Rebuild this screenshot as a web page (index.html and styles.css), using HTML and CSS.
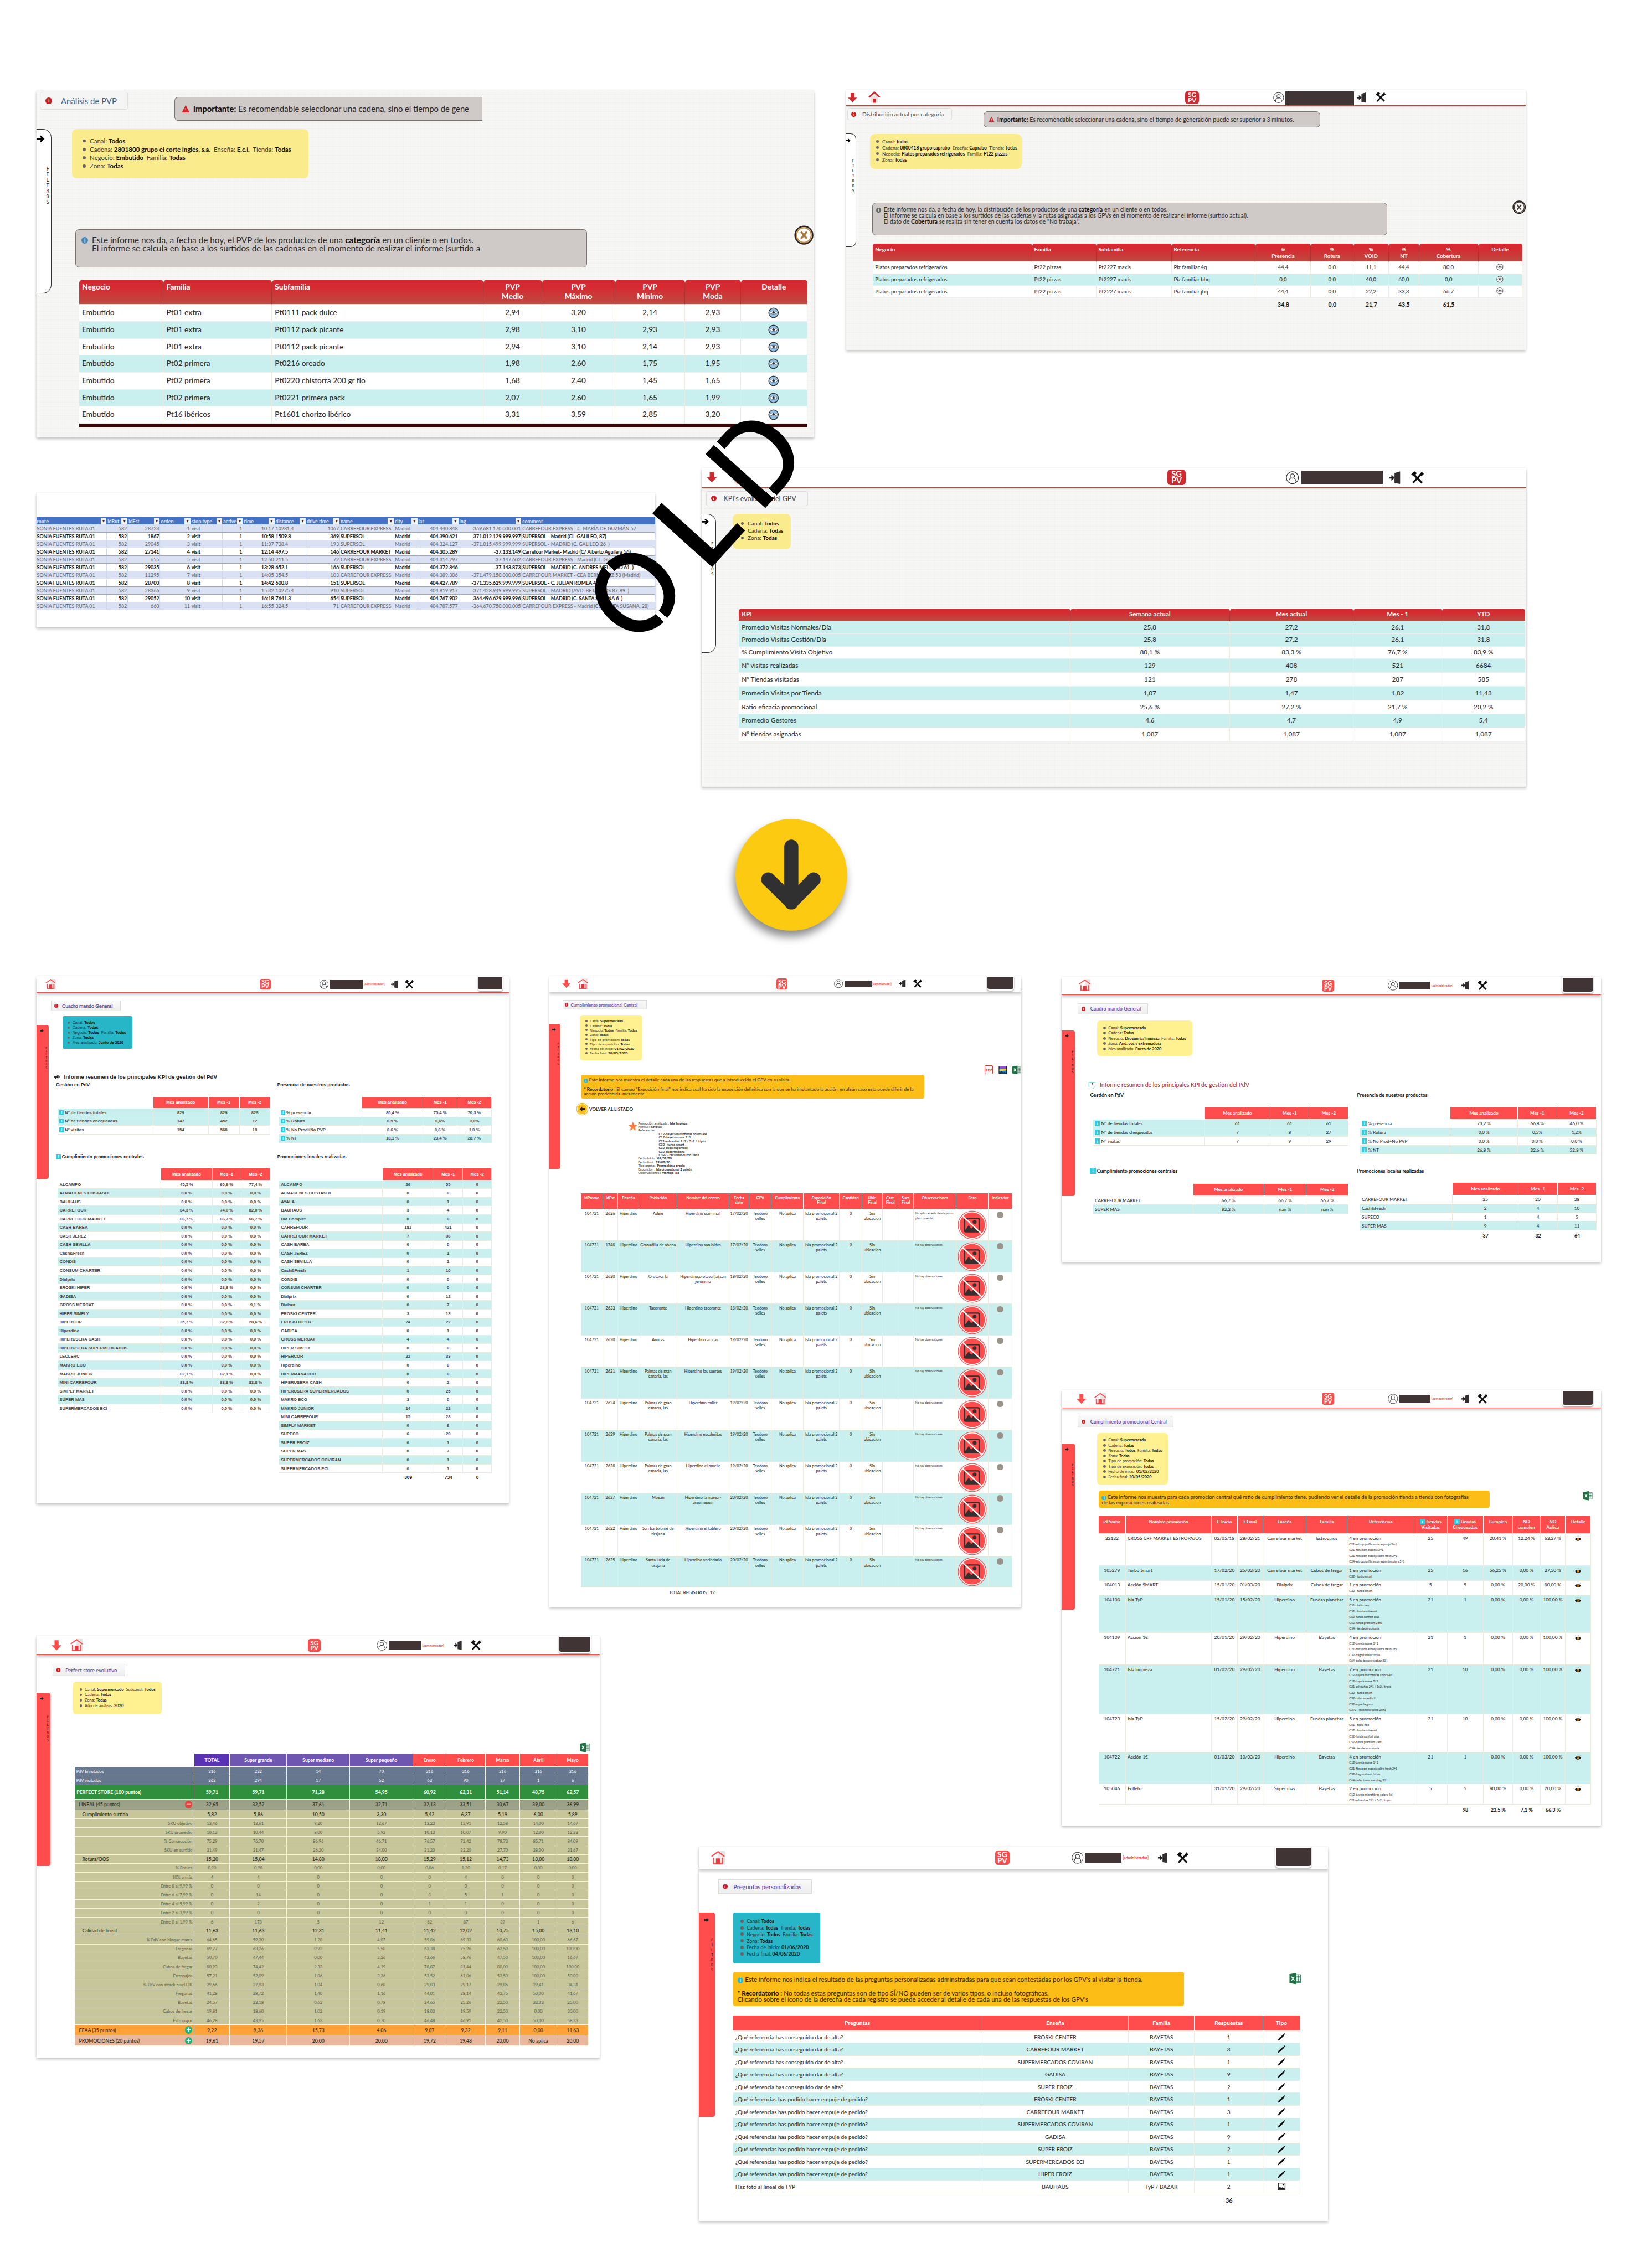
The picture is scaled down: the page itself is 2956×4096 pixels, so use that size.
FILE: index.html
```html
<!DOCTYPE html>
<html lang="es">
<head>
<meta charset="utf-8">
<title>SGPV - Informes</title>
<link rel="stylesheet" href="styles.css">
</head>
<body>
<svg class="defs" aria-hidden="true">
  <symbol id="down" viewBox="0 0 20 20"><path d="M6 0h8v10h6L10 20 0 10h6z"/></symbol>
  <symbol id="right" viewBox="0 0 20 20"><path d="M0 6h10V1l10 9-10 9v-5H0z"/></symbol>
  <symbol id="thin" viewBox="0 0 20 20"><path d="M0 10h17M9 3l8 7-8 7" fill="none" stroke="currentColor" stroke-width="4"/></symbol>
  <symbol id="home" viewBox="0 0 20 20"><path d="M10 0h10v20H10z" fill="#e6e4e4"/><path d="M4 8.500v10h12v-10L10 4z" fill="#fff"/><path d="M10 4v15h6V8.500z" fill="#efe3e3"/><path d="M.6 8.200 10 1.200l9.400 7" fill="none" stroke="currentColor" stroke-width="1.700"/><path d="M3.600 10v8.600h12.800V10" fill="none" stroke="currentColor" stroke-width="2"/><path d="M7 11h6v8H7z" fill="#e23c3e"/></symbol>
  <symbol id="homeold" viewBox="0 0 20 20"><path d="M4 9v10h12V9l-6-6z" fill="#e8e4e2"/><path d="M1 10 10 1.500 19 10" fill="none" stroke="currentColor" stroke-width="2.600"/><path d="M7.500 12h5v7h-5z" fill="currentColor"/></symbol>
  <symbol id="user" viewBox="0 0 20 20"><g fill="none" stroke="#333" stroke-width="1"><circle cx="10" cy="10" r="9.300"/><circle cx="10" cy="7.500" r="3.300"/><path d="M4.500 16c0-4 2-5.500 5.500-5.500s5.500 1.500 5.500 5.500"/></g></symbol>
  <symbol id="door" viewBox="0 0 20 20"><path d="M9 2.500 18 0v20l-9-1.500z" fill="#332d2d"/><path d="M0 8.500h4V5l5.500 5L4 15v-3.500H0z" fill="#222"/></symbol>
  <symbol id="tools" viewBox="0 0 20 20"><g fill="none" stroke="#111" stroke-width="3"><path d="M3 18 16 4M4 5l13 13"/></g><path d="M0 5 5 0l4 3-5 5zM13 5l4-5 1 3 2 1-4 4z" fill="#111"/></symbol>
  <symbol id="excel" viewBox="0 0 20 20"><path d="M11 3h8.500v14H11z" fill="#fff" stroke="#1d7044" stroke-width=".8"/><path d="M12 6h7M12 9h7M12 12h7M12 15h7M15.500 4v12" stroke="#1d7044" stroke-width=".8"/><path d="M0 2.200 12 0v20L0 17.800z" fill="#1d7044"/><path d="m3.500 6.500 5 7m0-7-5 7" stroke="#fff" stroke-width="1.600"/></symbol>
  <symbol id="gallery" viewBox="0 0 20 20"><rect x=".5" y=".5" width="19" height="19" rx="2" fill="#111"/><path d="M2 2h16v6H2z" fill="#8c4fd6"/><path d="M2 7h16v11H2z" fill="#1c86c9"/><path d="M2 9c5-3 8-1 16-2v4c-7 2-10 0-16 2z" fill="#f4cf3a"/><path d="m2 18 5-6 4 4 3-2 4 4z" fill="#16324a"/></symbol>
  <symbol id="star" viewBox="0 0 20 20"><path d="m10 0 3 7 7 .6-5.300 5 1.600 7.400L10 16l-6.300 4 1.600-7.400L0 7.600 7 7z" fill="#ff7a3d"/></symbol>
  <symbol id="mega" viewBox="0 0 20 20"><path d="M0 7h8l5-4v13l-5-4H6l1 6H3l-1-6H0zM15 4l2 0v11l-2 0zM18.500 7h1.500v5h-1.500z" fill="#2c2626"/></symbol>
  <symbol id="ask" viewBox="0 0 20 20"><path d="M1 1h18v14h-3v4.500L11 15H1z" fill="#fff" stroke="#5ccfe0" stroke-width="1.300"/></symbol>
  <symbol id="eye" viewBox="0 0 20 20"><path d="M0 12c4-6 16-6 20 0-4 8-16 8-20 0z" fill="#111"/><circle cx="10" cy="12" r="4.200" fill="#e79a1d"/><circle cx="10" cy="12" r="1.800" fill="#111"/><path d="M3 5 2 3M7 3.500 6.500 1M10 3V.5M13 3.500l.5-2.500M17 5l1-2" stroke="#555" stroke-width="1"/></symbol>
  <symbol id="pencil" viewBox="0 0 20 20"><path d="M0 20 2 14 14.500 2.500l3 3L5 17zM15.500 1.500 17 0l3 3-1.500 1.500z" fill="#0b0b0b"/></symbol>
  <symbol id="pic" viewBox="0 0 20 20"><rect x="1" y="1" width="18" height="18" rx="1.500" fill="#fff" stroke="#111" stroke-width="2"/><circle cx="14" cy="6" r="2" fill="#111"/><path d="m2 18 0-5 4-2 3 3 3-2 6 3v3z" fill="#111"/></symbol>
  <symbol id="nophoto" viewBox="0 0 60 60"><circle cx="30" cy="30" r="29.500" fill="#ff4c4c"/><circle cx="30" cy="30" r="27" fill="none" stroke="#fff" stroke-width="2"/><path d="M17 15h25a4 4 0 0 1 4 4v22a4 4 0 0 1-4 4H17a4 4 0 0 1-4-4V19a4 4 0 0 1 4-4z" fill="#3a2d2d"/><path d="M16 19a1.500 1.500 0 0 1 1.500-1.500h24A1.500 1.500 0 0 1 43 19v21l-9-8-6 5-5-7-7 10z" fill="#ff4c4c"/><circle cx="35" cy="23.500" r="4" fill="#3a2d2d"/><path d="M11 12 50 48" stroke="#fff" stroke-width="2.600"/></symbol>
  <symbol id="look" viewBox="0 0 20 20"><circle cx="10" cy="10" r="8.800" fill="var(--lens,#8fc0e6)" stroke="#333" stroke-width="1.500"/><path d="M3 9.500c3-4 11-4 14 0-3 4-11 4-14 0z" fill="#fff" stroke="#445" stroke-width=".8"/><circle cx="10" cy="9.500" r="2.300" fill="#2b3440"/></symbol>
  <symbol id="close" viewBox="0 0 40 40"><circle cx="20" cy="20" r="18" fill="#fff" stroke="#2a2320" stroke-width="3"/><circle cx="20" cy="20" r="15" fill="none" stroke="var(--ring,#c08a45)" stroke-width="2.500"/><path d="m14 13 12 14m0-14L14 27" stroke="var(--ring,#b07b38)" stroke-width="4"/></symbol>
  <symbol id="warn" viewBox="0 0 20 20"><path d="m10 1 9.500 18H.5z" fill="#d9232b"/><path d="M10 8v5m0 1.500v2" stroke="#fff" stroke-width="1.400"/></symbol>
</svg>

<main class="canvas">

<section class="panel old p1">
  <div class="head">
    <h2 class="tab"><i class="dot">i</i>Análisis de PVP</h2>
    <p class="note warn"><svg><use href="#warn"/></svg><span><b>Importante:</b> Es recomendable seleccionar una cadena, sino el tiempo de gene</span></p>
  </div>
  <div class="body">
    <aside class="filters"><svg><use href="#thin"/></svg><span>FILTROS</span></aside>
    <div class="main">
      <ul class="crumbs"><li>Canal: <b>Todos</b></li><li>Cadena: <b>2801800 grupo el corte ingles, s.a.</b>&nbsp; Enseña: <b>E.c.i.</b>&nbsp; Tienda: <b>Todas</b></li><li>Negocio: <b>Embutido</b>&nbsp; Familia: <b>Todas</b></li><li>Zona: <b>Todas</b></li></ul>
      <div class="note info"><i class="bubble">i</i><p>Este informe nos da, a fecha de hoy, el PVP de los productos de una <b>categoría</b> en un cliente o en todos.<br>El informe se calcula en base a los surtidos de las cadenas en el momento de realizar el informe (surtido a</p></div>
      <div class="table" id="t1"></div>
      <div class="foot"></div>
    </div>
  </div>
  <svg class="close"><use href="#close"/></svg>
</section>

<section class="panel old p2">
  <header class="bar"><svg class="down"><use href="#down"/></svg><svg class="home"><use href="#homeold"/></svg><div class="logo">SG<br>PV</div><svg class="user"><use href="#user"/></svg><span class="mask"></span><svg class="door"><use href="#door"/></svg><svg class="tools"><use href="#tools"/></svg></header>
  <div class="head">
    <h2 class="tab"><i class="dot">i</i>Distribución actual por categoría</h2>
    <p class="note warn"><svg><use href="#warn"/></svg><span><b>Importante:</b> Es recomendable seleccionar una cadena, sino el tiempo de generación puede ser superior a 3 minutos.</span></p>
  </div>
  <div class="body">
    <aside class="filters"><svg><use href="#thin"/></svg><span>FILTROS</span></aside>
    <div class="main">
      <ul class="crumbs"><li>Canal: <b>Todos</b></li><li>Cadena: <b>0800418 grupo caprabo</b>&nbsp; Enseña: <b>Caprabo</b>&nbsp; Tienda: <b>Todas</b></li><li>Negocio: <b>Platos preparados refrigerados</b>&nbsp; Familia: <b>Pt22 pizzas</b></li><li>Zona: <b>Todas</b></li></ul>
      <div class="note info"><i class="bubble">i</i><p>Este informe nos da, a fecha de hoy, la distribución de los productos de una <b>categoría</b> en un cliente o en todos.<br>El informe se calcula en base a los surtidos de las cadenas y la rutas asignadas a los GPVs en el momento de realizar el informe (surtido actual).<br>El dato de <b>Cobertura</b> se realiza sin tener en cuenta los datos de "No trabaja".</p></div>
      <div class="table" id="t2"></div>
    </div>
  </div>
  <svg class="close"><use href="#close"/></svg>
</section>

<section class="panel p3"><div class="table" id="t3"></div></section>

<section class="panel old p4">
  <header class="bar"><svg class="down"><use href="#down"/></svg><svg class="home"><use href="#homeold"/></svg><div class="logo">SG<br>PV</div><svg class="user"><use href="#user"/></svg><span class="mask"></span><svg class="door"><use href="#door"/></svg><svg class="tools"><use href="#tools"/></svg></header>
  <div class="head"><h2 class="tab"><i class="dot">i</i>KPI's evolución del GPV</h2></div>
  <div class="body">
    <aside class="filters"><svg><use href="#thin"/></svg><span>FILTROS</span></aside>
    <div class="main">
      <ul class="crumbs"><li>Canal: <b>Todos</b></li><li>Cadena: <b>Todas</b></li><li>Zona: <b>Todas</b></li></ul>
      <div class="table" id="t4"></div>
    </div>
  </div>
</section>

<div class="stamp"><span class="o"><i>O</i></span><span class="l"><i>L</i></span><span class="d"><i>D</i></span></div>

<svg class="next" viewBox="0 0 206 206"><circle cx="103" cy="103" r="103" fill="#fdca12"/><path d="M103 51v103M60.500 111.500 103 153l41-41.500" fill="none" stroke="#303030" stroke-width="26" stroke-linecap="round" stroke-linejoin="round"/></svg>

<section class="panel new p5">
  <header class="bar"><svg class="home"><use href="#home"/></svg><div class="logo">SG<br>PV</div><svg class="user"><use href="#user"/></svg><span class="mask"></span><em>[administrador]</em><svg class="door"><use href="#door"/></svg><svg class="tools"><use href="#tools"/></svg><span class="corner"></span></header>
  <h2 class="tab"><i class="dot">i</i>Cuadro mando General</h2>
  <div class="body">
    <aside class="filters"><svg><use href="#right"/></svg><span>FILTROS</span></aside>
    <div class="main">
      <ul class="crumbs teal"><li>Canal: <b>Todos</b></li><li>Cadena: <b>Todas</b></li><li>Negocio: <b>Todos</b>&nbsp; Familia: <b>Todas</b></li><li>Zona: <b>Todas</b></li><li>Mes analizado: <b>Junio de 2020</b></li></ul>
      <h3 class="title"><svg><use href="#mega"/></svg>Informe resumen de los principales KPI de gestión del PdV</h3>
      <div class="quad">
        <div class="block"><h4>Gestión en PdV</h4><div class="table" id="t5a"></div></div>
        <div class="block"><h4>Presencia de nuestros productos</h4><div class="table" id="t5b"></div></div>
        <div class="block"><h4><i class="sq">i</i>Cumplimiento promociones centrales</h4><div class="table" id="t5c"></div></div>
        <div class="block"><h4>Promociones locales realizadas</h4><div class="table" id="t5d"></div></div>
      </div>
    </div>
  </div>
</section>

<section class="panel new p6">
  <header class="bar"><svg class="down"><use href="#down"/></svg><svg class="home"><use href="#home"/></svg><div class="logo">SG<br>PV</div><svg class="user"><use href="#user"/></svg><span class="mask"></span><em>[administrador]</em><svg class="door"><use href="#door"/></svg><svg class="tools"><use href="#tools"/></svg><span class="corner"></span></header>
  <h2 class="tab"><i class="dot">i</i>Cumplimiento promocional Central</h2>
  <div class="body">
    <aside class="filters"><svg><use href="#right"/></svg><span>FILTROS</span></aside>
    <div class="main">
      <ul class="crumbs"><li>Canal: <b>Supermercado</b></li><li>Cadena: <b>Todas</b></li><li>Negocio: <b>Todos</b>&nbsp; Familia: <b>Todas</b></li><li>Zona: <b>Todas</b></li><li>Tipo de promoción: <b>Todas</b></li><li>Tipo de exposición: <b>Todas</b></li><li>Fecha de inicio: <b>01/02/2020</b></li><li>Fecha final: <b>20/05/2020</b></li></ul>
      <div class="exports"><span class="pdf">PDF</span><svg><use href="#gallery"/></svg><svg><use href="#excel"/></svg></div>
      <div class="amber"><p><i class="bubble">i</i>Este informe nos muestra el detalle cada una de las respuestas que a introduccido el GPV en su visita.</p><p class="gap"><b>* Recordatorio</b> : El campo "Exposición final" nos indica cual ha sido la exposición definitiva con la que se ha implantado la acción, en algún caso esta puede diferir de la<br>acción predefinida inicalmente.</p></div>
      <div class="back"><i><svg><use href="#right"/></svg></i>VOLVER AL LISTADO</div>
      <div class="promo"><svg><use href="#star"/></svg><div>Promoción analizada : <b>Isla limpieza</b><br>Familia : <b>Bayetas</b><br>Referencias :<div class="refs">C12-bayeta microfibras colors 4xl<br>C12-bayeta suave 2+1<br>C21-salvauñas 2+1 / 3x2 / triplo<br>C32 - turbo smart<br>C32-cubo superfácil<br>C32-superfregona<br>C392 - recambio turbo 2en1</div>Fecha Inicio : <b>01/02/20</b><br>Fecha final : <b>29/02/20</b><br>Tipo promo : <b>Promoción a precio</b><br>Exposición : <b>Isla promocional 2 palets</b><br>Observaciones : <b>Montaje isla</b></div></div>
      <div class="table" id="t6"></div>
      <p class="total">TOTAL REGISTROS : 12</p>
    </div>
  </div>
</section>

<section class="panel new p7">
  <header class="bar"><svg class="home"><use href="#home"/></svg><div class="logo">SG<br>PV</div><svg class="user"><use href="#user"/></svg><span class="mask"></span><em>[administrador]</em><svg class="door"><use href="#door"/></svg><svg class="tools"><use href="#tools"/></svg><span class="corner"></span></header>
  <h2 class="tab"><i class="dot">i</i>Cuadro mando General</h2>
  <div class="body">
    <aside class="filters"><svg><use href="#right"/></svg><span>FILTROS</span></aside>
    <div class="main">
      <ul class="crumbs"><li>Canal: <b>Supermercado</b></li><li>Cadena: <b>Todas</b></li><li>Negocio: <b>Droguería/limpieza</b>&nbsp; Familia: <b>Todas</b></li><li>Zona: <b>And. occ y extremadura</b></li><li>Mes analizado: <b>Enero de 2020</b></li></ul>
      <h3 class="title"><span class="ask"><svg><use href="#ask"/></svg><b>?</b></span>Informe resumen de los principales KPI de gestión del PdV</h3>
      <div class="quad">
        <div class="block"><h4>Gestión en PdV</h4><div class="table" id="t7a"></div></div>
        <div class="block"><h4>Presencia de nuestros productos</h4><div class="table" id="t7b"></div></div>
        <div class="block"><h4><i class="sq">i</i>Cumplimiento promociones centrales</h4><div class="table" id="t7c"></div></div>
        <div class="block"><h4>Promociones locales realizadas</h4><div class="table" id="t7d"></div></div>
      </div>
    </div>
  </div>
</section>

<section class="panel new p8">
  <header class="bar"><svg class="down"><use href="#down"/></svg><svg class="home"><use href="#home"/></svg><div class="logo">SG<br>PV</div><svg class="user"><use href="#user"/></svg><span class="mask"></span><em>[administrador]</em><svg class="door"><use href="#door"/></svg><svg class="tools"><use href="#tools"/></svg><span class="corner"></span></header>
  <h2 class="tab"><i class="dot">i</i>Cumplimiento promocional Central</h2>
  <div class="body">
    <aside class="filters"><svg><use href="#right"/></svg><span>FILTROS</span></aside>
    <div class="main">
      <ul class="crumbs"><li>Canal: <b>Supermercado</b></li><li>Cadena: <b>Todas</b></li><li>Negocio: <b>Todos</b>&nbsp; Familia: <b>Todas</b></li><li>Zona: <b>Todas</b></li><li>Tipo de promoción: <b>Todas</b></li><li>Tipo de exposición: <b>Todas</b></li><li>Fecha de inicio: <b>01/02/2020</b></li><li>Fecha final: <b>20/05/2020</b></li></ul>
      <div class="strip"><div class="amber"><p><i class="bubble">i</i>Este informe nos muestra para cada promocion central qué ratio de cumplimiento tiene, pudiendo ver el detalle de la promoción tienda a tienda con fotografías<br>de las exposiciónes realizadas.</p></div><svg class="xls"><use href="#excel"/></svg></div>
      <div class="table" id="t8"></div>
    </div>
  </div>
</section>

<section class="panel new p9">
  <header class="bar"><svg class="down"><use href="#down"/></svg><svg class="home"><use href="#home"/></svg><div class="logo">SG<br>PV</div><svg class="user"><use href="#user"/></svg><span class="mask"></span><em>[administrador]</em><svg class="door"><use href="#door"/></svg><svg class="tools"><use href="#tools"/></svg><span class="corner"></span></header>
  <h2 class="tab"><i class="dot">i</i>Perfect store evolutivo</h2>
  <div class="body">
    <aside class="filters"><svg><use href="#right"/></svg><span>FILTROS</span></aside>
    <div class="main">
      <ul class="crumbs"><li>Canal: <b>Supermercado</b>&nbsp; Subcanal: <b>Todos</b></li><li>Cadena: <b>Todas</b></li><li>Zona: <b>Todas</b></li><li>Año de análisis: <b>2020</b></li></ul>
      <svg class="xls"><use href="#excel"/></svg>
      <div class="table" id="t9"></div>
    </div>
  </div>
</section>

<section class="panel new p10">
  <header class="bar"><svg class="home"><use href="#home"/></svg><div class="logo">SG<br>PV</div><svg class="user"><use href="#user"/></svg><span class="mask"></span><em>[administrador]</em><svg class="door"><use href="#door"/></svg><svg class="tools"><use href="#tools"/></svg><span class="corner"></span></header>
  <h2 class="tab"><i class="dot">i</i>Preguntas personalizadas</h2>
  <div class="body">
    <aside class="filters"><svg><use href="#right"/></svg><span>FILTROS</span></aside>
    <div class="main">
      <ul class="crumbs teal"><li>Canal: <b>Todos</b></li><li>Cadena: <b>Todas</b>&nbsp; Tienda: <b>Todas</b></li><li>Negocio: <b>Todos</b>&nbsp; Familia: <b>Todas</b></li><li>Zona: <b>Todas</b></li><li>Fecha de Inicio: <b>01/06/2020</b></li><li>Fecha final: <b>04/06/2020</b></li></ul>
      <div class="strip"><div class="amber"><p><i class="bubble">i</i>Este informe nos indica el resultado de las preguntas personalizadas adminstradas para que sean contestadas por los GPV's al visitar la tienda.</p><p class="gap"><b>* Recordatorio</b> : No todas estas preguntas son de tipo SÍ/NO pueden ser de varios tipos, o incluso fotográficas.<br>Clicando sobre el icono de la derecha de cada registro se puede acceder al detalle de cada una de las respuestas de los GPV's</p></div><svg class="xls"><use href="#excel"/></svg></div>
      <div class="table" id="t10"></div>
    </div>
  </div>
</section>

</main>
<script src="tables.js"></script>
</body>
</html>
```
FILE: styles.css
```css
* { box-sizing: border-box; margin: 0; padding: 0; }
html, body { width: 2956px; height: 4096px; overflow: hidden; background: #fff; }
body { font-family: Lato, "Liberation Sans", sans-serif; color: #332f2f; }
svg { display: block; flex: none; overflow: visible; }
.defs { position: absolute; width: 0; height: 0; }
i, em { font-style: normal; }
b { font-weight: 700; color: #151010; }

/* free board on which the report windows are pinned */
.canvas { position: relative; width: 3017px; height: 4180px; zoom: .9798; }
.panel { position: absolute; overflow: hidden; background: #fff; box-shadow: 0 4px 5px rgba(0,0,0,.2), 0 0 3px rgba(0,0,0,.1); white-space: nowrap; }
.p1 { left: 67px; top: 166px; width: 1433px; height: 640px; }
.p2 { left: 1560px; top: 165px; width: 1252px; height: 480px; }
.p3 { left: 67px; top: 908px; width: 1140px; height: 248px; }
.p4 { left: 1293px; top: 862px; width: 1520px; height: 588px; }
.p5 { left: 67px; top: 1799px; width: 871px; height: 972px; }
.p6 { left: 1012px; top: 1799px; width: 870px; height: 1163px; }
.p7 { left: 1957px; top: 1800px; width: 994px; height: 526px; }
.p8 { left: 1957px; top: 2562px; width: 994px; height: 803px; }
.p9 { left: 67px; top: 3015px; width: 1038px; height: 778px; }
.p10 { left: 1288px; top: 3404px; width: 1159px; height: 690px; }

/* shared pieces */
.body { display: flex; align-items: flex-start; }
.main { flex: 1; min-width: 0; display: flex; flex-direction: column; align-items: flex-start; }
.tab { display: flex; align-items: center; font-weight: 500; background: linear-gradient(#fafafa, #ededed); border: 1px solid #dcdcdc; flex: none; }
.dot { display: grid; place-items: center; border-radius: 50%; background: #cf1a20; color: #fff; font: 700 .62em/1 Lato, sans-serif; width: 1.300em; height: 1.300em; flex: none; }
.bubble { display: inline-grid; place-items: center; width: 1em; height: 1em; border-radius: 50%; background: #28b9cf; color: #fff; flex: none; line-height: 1; font-size: 1em; }
.sq { display: inline-grid; place-items: center; width: 1.150em; height: 1.150em; background: #2fcde2; color: #fff; font-weight: 700; line-height: 1; margin-right: .25em; flex: none; }
.crumbs { list-style: none; background: #fff090; display: flex; flex-direction: column; color: #3a3530; }
.crumbs li { display: flex; align-items: center; white-space: pre; }
.crumbs li::before { content: ""; width: .7em; height: .7em; border-radius: 50%; background: #6a6262; margin-right: .85em; }
.crumbs.teal { background: #26b6c8; color: #12383e; border-radius: 3px; }
.filters { flex: none; display: flex; flex-direction: column; position: relative; }
.filters span { writing-mode: vertical-rl; text-orientation: upright; align-self: flex-end; font-family: "DejaVu Sans Mono", monospace; color: #222; line-height: 1; letter-spacing: 0; }
.amber { background: #fdbd17; border-radius: 4px; color: #2f240a; }
.amber p { display: block; }
.amber .bubble { margin-right: .3em; vertical-align: -.1em; font-size: .9em; }
.strip { display: flex; align-items: flex-start; }

/* header bar: every piece sits at a share of the window's width */
.bar { display: flex; align-items: center; background: #fff; }
.bar svg { width: 2%; height: 66%; }
.logo { display: grid; place-items: center; text-align: center; background: #ff4c4c; color: #fff; font-weight: 700; line-height: .8; flex: none; }
.mask { background: #403434; flex: none; }
.new .bar { border-bottom: 2px solid #ff4c4c; box-shadow: 0 4px 5px rgba(0,0,0,.22); color: #ff4c4c; position: relative; }
.new .down { width: 1.800%; margin-left: 2.700%; margin-right: -.400%; fill: #ff4c4c; }
.new .home { width: 2.200%; margin-left: 1.900%; height: 70%; }
.new .logo { margin-left: auto; width: 2.300%; aspect-ratio: 1; border-radius: 20%; }
.new .user { width: 1.900%; margin-left: 9.900%; }
.new .mask { width: 5.700%; height: 44%; margin-left: .300%; }
.new .bar em { width: 4.300%; margin-left: .200%; color: #f22; font-size: var(--adm); margin-right: 1.300%; font-weight: 500; }
.new .door { width: 1.600%; margin-right: 1.400%; }
.new .tools { width: 1.900%; margin-right: 13.800%; }
.new .corner { width: 5.700%; align-self: stretch; margin-right: 1.300%; background: #403434; border: 2px solid #fff; border-top: 3px solid #fff; border-bottom: 4px solid #fff; border-radius: 0 0 5px 5px; box-shadow: 0 2px 3px rgba(0,0,0,.35); margin-bottom: 2px; }
.new .tab { color: #5b3aa8; }
.new .tab .dot { margin: 0 .9em 0 .550em; }
.p7 .tab .dot, .p8 .tab .dot, .p9 .tab .dot { margin: 0 9px 0 6px; }
.new .filters { background: #ff4c4c; border-radius: 0 4px 4px 0; color: #2c2222; }
.new .filters svg { width: 9px; height: 7px; margin: 7px 0 0 5px; fill: #2c2222; }
.new .crumbs { border-radius: 6px; }
.new .crumbs.teal { border-radius: 3px; }

/* older look */
.old { background: #f6f6f5; background-image: repeating-linear-gradient(0deg, rgba(0,0,0,.02) 0 1px, transparent 1px 8px), repeating-linear-gradient(90deg, rgba(0,0,0,.012) 0 1px, transparent 1px 13px); }
.old .bar { border-bottom: 2px solid #9a5547; box-shadow: 0 2px 3px rgba(120,90,70,.35); position: relative; }
.old .bar .down { fill: #cf2a2f; color: #cf2a2f; }
.old .bar .home { color: #cf2a2f; }
.old .logo { background: #cf2a2f; border-radius: 6px; }
.old .head { display: flex; align-items: flex-start; }
.old .tab { color: #444; border-radius: 4px; background: #f5f5f5; font-weight: 400; }
.old .filters { background: #fff; border: 1.500px solid #333; border-left: 0; border-radius: 0 16px 16px 0; }
.old .filters svg { color: #000; }
.old .note { background: #cfcac7; border: 2px solid #7c716b; border-radius: 7px; display: flex; overflow: hidden; color: #2c2a2a; }
.old .crumbs { background: #faeb8d; border-radius: 9px; }
.old .note .bubble { background: #4c86b8; font-size: .8em; }
.close { position: absolute; }

/* tables */
.table { flex: none; font-weight: 500; }
.row { display: grid; grid-template-columns: var(--cols); }
.row > div { display: flex; align-items: center; justify-content: center; border-right: 1px solid #ecebe0; overflow: hidden; min-width: 0; }
.row > .l { justify-content: flex-start; padding-left: .4em; }
.row > .r { justify-content: flex-end; padding-right: .4em; }
.row.even > div { background: #c9efee; }
.row.odd > div { background: #fff; }
.new .row > div { border-bottom: 1px solid #e9ebdf; }
.row.th > div { background: #ff4c4c; color: #fff; font-weight: 700; text-align: center; border-color: #fff; }
.row.th > .none { background: none; border: 0; }
.row.sum > div { background: none; border: 0; font-weight: 700; color: #181414; }
.old .row.th > div { background: linear-gradient(#d62a31 30%, #bd4a40); border-radius: .45em .45em 0 0; align-items: flex-start; border-right: 1px solid #a33; color: #fff; }
.old .row > div { border-bottom: 1px solid #eee; }
.old .row.sum > div { border: 0; }

/* Análisis de PVP */
.p1 .head { height: 72px; }
.p1 .tab { margin: 3px 0 0 6px; width: 163px; height: 33px; font-size: 15.200px; color: #40608a; }
.p1 .dot { margin: 0 16px 0 10px; }
.p1 .warn { margin: 12.500px 0 0 86px; width: 567px; height: 44px; border-right: 0; border-radius: 7px 0 0 7px; align-items: center; font-size: 15.100px; padding-left: 10px; overflow: visible; }
.p1 .warn svg { width: 19px; height: 15px; margin-right: 4px; }
.p1 .filters { width: 28px; height: 303px; }
.p1 .filters svg { width: 15px; height: 16px; margin: 9px 0 0 0; }
.p1 .filters span { font-size: 9px; margin: 42px 2px 0 0; }
.p1 .crumbs { margin-left: 37.500px; width: 436.500px; height: 91px; padding: 14px 0 0 20px; font-size: 11.700px; }
.p1 .crumbs li { height: 15.500px; }
.p1 .crumbs li::before { width: 6px; height: 6px; margin-right: 7px; }
.p1 .info { margin: 94px 0 0 44px; width: 943px; height: 70px; font-size: 15.650px; line-height: 15.500px; padding: 11px 0 0 10px; }
.p1 .info .bubble { margin: 2px 7px 0 0; }
.p1 .close { width: 36px; height: 36px; right: 0; top: 249px; }
.p1 .table { margin: 22.500px 0 0 50.500px; font-size: 14px; }
.p1 .row { height: 31.300px; }
.p1 .row > div { padding-bottom: 3px; }
.p1 .row.th { height: 46.300px; line-height: 17.500px; font-size: 14.100px; }
.p1 .row.th > div { padding-top: 4px; }
.p1 .row svg { width: 20px; height: 20px; margin-top: 3px; }
.p1 .foot { width: 1342.400px; height: 7.500px; margin-left: 50.500px; background: #3b0606; }

/* Distribución actual por categoría */
.p2 .bar { height: 30px; }
.p2 .bar .down { width: 17px; height: 19px; margin-left: 3px; }
.p2 .bar .home { width: 24px; height: 22px; margin-left: 19px; }
.p2 .logo { width: 26px; height: 24px; margin-left: 561px; font-size: 12px; }
.p2 .user { margin-left: 136px; width: 20px !important; height: 21px !important; }
.p2 .mask { width: 126px; height: 25px; margin: 3px 0 0 3px; }
.p2 .door { width: 19px; height: 19px; margin-left: 6px; }
.p2 .tools { width: 21px !important; margin-left: 14px; }
.p2 .head { height: 51px; }
.p2 .tab { margin: 4px 0 0 2px; width: 192px; height: 23px; font-size: 10.550px; }
.p2 .dot { margin: 0 11px 0 6px; font-size: 7px; }
.p2 .warn { margin: 10px 0 0 59px; width: 620px; height: 30px; font-size: 10.850px; align-items: center; padding-left: 7px; }
.p2 .warn svg { width: 13px; height: 11px; margin-right: 4px; }
.p2 .filters { width: 18px; height: 209px; border-radius: 0 10px 10px 0; }
.p2 .filters svg { width: 8px; height: 12px; margin-top: 6px; }
.p2 .filters span { font-size: 7.400px; margin: 27px 1px 0 0; }
.p2 .crumbs { margin: 1px 0 0 25px; width: 280px; height: 64px; padding: 8.500px 0 0 12px; font-size: 8.600px; }
.p2 .crumbs li { height: 11.200px; }
.p2 .crumbs li::before { width: 5px; height: 5px; margin-right: 6px; }
.p2 .info { margin: 63px 0 0 29px; width: 950px; height: 60px; font-size: 10.850px; line-height: 11.100px; padding: 6px 0 0 7px; }
.p2 .info .bubble { background: #666; margin: 2px 5px 0 0; }
.p2 .close { width: 25px; height: 25px; right: 0; top: 204px; --ring: #4a4038; }
.p2 .table { margin: 15px 0 0 31px; font-size: 9.900px; }
.p2 .row { height: 22.300px; }
.p2 .row > div { padding-bottom: 2px; }
.p2 .row.th { height: 33.500px; line-height: 12.300px; font-size: 9.900px; }
.p2 .row.th > div { padding-top: 4px; }
.p2 .row.sum { font-size: 10.700px; margin-top: 2px; }
.p2 .row svg { width: 13px; height: 13px; --lens: #fff; }

/* ruta */
.p3 .table { margin-top: 44px; font-size: 9.050px; }
.p3 .row { height: 14.400px; color: #6a6c74; }
.p3 .row > div { border-right-color: #cfd8ea; border-bottom: 1px solid #8ea9db; padding: 0 1px; overflow: visible; }
.p3 .row.even > div { background: #fff; color: #111; -webkit-text-stroke: .25px #111; }
.p3 .row.odd > div { background: #d9e1f2; }
.p3 .row.th { height: 15px; }
.p3 .row.th > div { background: #4472c4; border: 0; justify-content: space-between; overflow: hidden; font-weight: 700; color: #dfe8f8; align-items: flex-end; }
.p3 .row.th u { flex: none; width: 11px; height: 12px; background: #f2f2f2; color: #333; font: 6px/12px "DejaVu Sans", sans-serif; text-align: center; text-decoration: none; margin-left: -12px; }

/* KPI's evolución */
.p4 .bar { height: 37px; }
.p4 .bar .down { width: 19px; height: 24px; margin-left: 9px; }
.p4 .bar .home { width: 28px; height: 25px; margin-left: 25px; }
.p4 .logo { width: 33px; height: 29px; margin-left: 778px; font-size: 15px; }
.p4 .user { width: 26px !important; margin-left: 184px; }
.p4 .mask { width: 151px; height: 24px; margin-left: 3px; }
.p4 .door { width: 23px !important; margin-left: 11px; }
.p4 .tools { width: 26px !important; margin-left: 17px; }
.p4 .head { height: 48px; }
.p4 .tab { margin: 6px 0 0 8px; width: 188px; height: 28px; font-size: 12.800px; }
.p4 .dot { margin: 0 13px 0 8px; }
.p4 .filters { width: 26.500px; height: 256px; }
.p4 .filters svg { width: 14px; height: 13px; margin-top: 7px; }
.p4 .filters span { font-size: 8px; margin: 30px 2px 0 0; }
.p4 .crumbs { margin-left: 30.500px; width: 107px; height: 65px; padding: 11px 0 0 16px; font-size: 10.300px; }
.p4 .crumbs li { height: 13.300px; }
.p4 .crumbs li::before { width: 5px; height: 5px; margin-right: 7px; }
.p4 .table { margin: 109.500px 0 0 42.500px; font-size: 12px; }
.p4 .row { height: 25.400px; }
.p4 .row > div { padding-bottom: 2px; }
.p4 .row.s { height: 23.200px; }
.p4 .row.th { height: 24px; font-size: 11.900px; }
.p4 .row.th > div { align-items: center; padding-bottom: 3px; }

/* stencil stamp across the old windows; the masks leave the stencil bridges open */
.stamp { position: absolute; left: 1181px; top: 1010px; display: flex; font-size: 206px; line-height: 1; font-weight: 600; color: #000; transform-origin: 0 183px; transform: rotate(-48deg); }
.stamp span { display: flex; justify-content: center; padding: 0 12px; margin: 0 -12px; box-sizing: content-box; }
.stamp i { display: block; flex: none; }
.stamp .o { width: 137px; margin-right: 47px; -webkit-mask: linear-gradient(90deg, #000 0 76px, transparent 76px 85px, #000 85px); mask: linear-gradient(90deg, #000 0 76px, transparent 76px 85px, #000 85px); }
.stamp .o i { transform: scaleX(.92); }
.stamp .l { width: 94px; margin-right: 42px; }
.stamp .l i { transform: translateX(-7px) scaleX(1.060); }
.stamp .d { width: 122px; -webkit-mask: linear-gradient(90deg, #000 0 36px, transparent 36px 44px, #000 44px); mask: linear-gradient(90deg, #000 0 36px, transparent 36px 44px, #000 44px); }
.stamp .d i { transform: translateX(-4px) scaleX(.93); }
.next { position: absolute; left: 1355px; top: 1509px; width: 206px; height: 206px; filter: drop-shadow(-3px 12px 8px rgba(0,0,0,.45)); }

/* Cuadro de mando, junio */
.p5 { font-family: "Liberation Sans", Arial, sans-serif; --adm: 5.800px; }
.p5 .bar { height: 31px; }
.p5 .logo { font: 700 11px/.8 Lato, sans-serif; margin-left: 43.200%; }
.p5 .user { margin-left: 10.300%; }
.p5 .mask { width: 7%; height: 56%; }
.p5 .bar em { width: 4.800%; }
.p5 .corner { margin-left: -2px; }
.p5 .tab { margin: 14.500px 0 0 27px; width: 128px; height: 19.500px; font-size: 8.950px; -webkit-text-stroke: .2px; }
.p5 .tab .dot { margin: 0 7px 0 5px; }
.p5 .filters { margin-top: 25.500px; width: 23px; height: 283px; }
.p5 .filters span { font-size: 5.100px; margin: 25px 2.500px 0 0; }
.p5 .crumbs { margin: 8.500px 0 0 25px; width: 129px; height: 61px; padding: 8px 0 0 10px; font-size: 6.900px; }
.p5 .crumbs li { height: 9.100px; }
.p5 .crumbs li::before { width: 4px; height: 4px; margin-right: 4.500px; }
.p5 .title { display: flex; align-items: center; margin: 44px 0 0 8px; height: 15px; font-size: 10.100px; font-weight: 700; color: #222; }
.p5 .title svg { width: 14px; height: 10px; margin-right: 6px; }
.quad { display: grid; }
.p5 .quad { grid-template: 132.500px auto / 408px auto; margin-left: 13px; }
.p5 h4 { height: 15px; display: flex; align-items: center; font-size: 8.450px; color: #161616; }
.p5 .table { margin: 14px 0 0 3.500px; font-size: 7.820px; font-weight: 700; color: #4c4646; }
.p5 .row { height: 15.880px; }
.p5 .row.th { height: 21.800px; font-size: 7.850px; }
.p5 .row.sum { font-size: 8.500px; }
.p5 .sq { height: 1.100em; width: 1.050em; }

/* Cumplimiento, detalle */
.p6 { --adm: 5.300px; }
.p6 .bar { height: 30px; }
.p6 .logo, .p7 .logo, .p8 .logo, .p9 .logo { font-size: 11.500px; }
.p6 .logo, .p8 .logo, .p9 .logo { margin-left: 40%; }
.p6 .tab { margin: 14px 0 0 25px; width: 155px; height: 18px; font-size: 8.050px; }
.p6 .filters { margin-top: 26px; width: 21px; height: 268px; }
.p6 .filters span { font-size: 5.300px; margin: 20px 2px 0 0; }
.p6 .crumbs { margin: 10px 0 0 36px; width: 115px; height: 83.500px; padding: 6.500px 0 0 10px; font-size: 6.500px; }
.p6 .crumbs li { height: 8.500px; }
.p6 .crumbs li::before { width: 4px; height: 4px; margin-right: 4px; }
.p6 .exports { align-self: flex-end; display: flex; gap: 10px; margin-top: 9px; height: 17px; }
.p6 .exports svg { width: 16px; height: 17px; }
.p6 .pdf { width: 15px; height: 17px; border: 1px solid #e3342f; border-radius: 2px; display: grid; place-items: center; font-size: 6.500px; font-weight: 700; color: #e3342f; }
.p6 .amber { margin: .5px 0 0 38px; width: 632px; height: 44px; padding: 5px 0 0 5px; font-size: 8.400px; line-height: 8.600px; }
.p6 .gap { margin-top: 8px !important; }
.p6 .back { display: flex; align-items: center; margin: 9px 0 0 30px; height: 21px; font-size: 8.500px; font-weight: 500; color: #151010; }
.p6 .back i { width: 20px; height: 20px; border-radius: 50%; background: #fdbd17; border: 1px solid #fff; box-shadow: 0 0 0 1.200px #fdbd17; display: grid; place-items: center; margin-right: 3px; }
.p6 .back svg { width: 13px; height: 10px; transform: scaleX(-1); fill: #2c2222; }
.p6 .promo { display: flex; margin: 12.500px 0 0 125px; height: 97.500px; font-size: 6px; line-height: 6.500px; }
.p6 .promo svg { width: 16px; height: 16px; margin-right: 2px; }
.p6 .refs { padding-left: 38px; color: #151010; font-weight: 600; }
.p6 .table { margin: 35px 0 0 38px; font-size: 7.500px; line-height: 9.400px; }
.p6 .row { height: 58.150px; }
.p6 .row > div { align-items: flex-start; text-align: center; padding-top: 3px; }
.p6 .row > .l { text-align: left; font-size: 5.200px; padding-left: 3px; font-weight: 400; }
.p6 .row.th { height: 29px; }
.p6 .row.th > div { font-size: 7.400px; justify-content: center; text-align: center; line-height: 7.500px; padding-top: 5px; }
.p6 .row svg { width: 54px; height: 54px; margin-top: -1px; }
.p6 .row s { width: 12px; height: 12px; margin-top: 1px; border-radius: 50%; background: #9a9289; }
.p6 .total { font-size: 8.050px; font-weight: 500; margin: 4px 0 0 200px; color: #151010; }

/* Cuadro de mando, enero */
.p7, .p8, .p9 { --adm: 6.100px; }
.p7 .bar { height: 34px; }
.p7 .home { margin-left: 3.100%; }
.p7 .logo { margin-left: 42.900%; }
.p7 .tab { margin: 15px 0 0 29px; width: 130px; height: 21px; font-size: 9.200px; }
.p7 .filters, .p8 .filters { margin-top: 29px; width: 24px; height: 306px; }
.p7 .filters span, .p8 .filters span { font-size: 5.900px; margin: 23px 2px 0 0; }
.p7 .crumbs { margin: 10.700px 0 0 41px; width: 175px; height: 66px; padding: 9px 0 0 11px; font-size: 7.400px; }
.p7 .crumbs li, .p8 .crumbs li { height: 9.700px; }
.p7 .crumbs li::before, .p8 .crumbs li::before { width: 5px; height: 5px; margin-right: 4.500px; }
.p7 .title { display: flex; align-items: center; margin: 44.500px 0 0 25px; height: 17px; font-size: 10.800px; font-weight: 400; color: #ab2530; }
.p7 .ask { display: grid; place-items: center; margin-right: 7px; }
.p7 .ask > * { grid-area: 1 / 1; font-size: 7px; }
.p7 .ask svg { width: 14px; height: 13px; margin-top: 2px; }
.p7 .quad { grid-template: 140px auto / 492px auto; margin-left: 28px; }
.p7 h4 { height: 20px; display: flex; align-items: center; font-size: 9px; color: #161616; }
.p7 .table { margin: 12px 0 0 5.500px; font-size: 8.300px; }
.p7 .row { height: 16.200px; }
.p7 .row.th { height: 23.300px; font-size: 8.400px; }
.p7 .row.sum { height: 19px; font-size: 9px; }
.p7 .block:nth-child(3) .table { margin-top: 13.500px; }

/* Cumplimiento, listado */
.p8 .bar { height: 33px; }
.p8 .tab { margin: 15px 0 0 29px; width: 177px; height: 21.500px; font-size: 9.200px; }
.p8 .crumbs { margin: 9.500px 0 0 41px; width: 131px; height: 96px; padding: 8.500px 0 0 11px; font-size: 7.400px; }
.p8 .strip { margin: 10.500px 0 0 43.500px; }
.p8 .amber { width: 721.500px; height: 31.500px; padding: 7px 0 0 6px; font-size: 9.600px; line-height: 9.700px; }
.p8 .xls { width: 19px; height: 17px; margin: 1px 0 0 171px; }
.p8 .table { margin: 14.500px 0 0 43.500px; font-size: 8.550px; line-height: 10.700px; }
.p8 .row > div { align-items: flex-start; text-align: center; padding-top: 3px; }
.p8 .row > .l { text-align: left; padding-left: 3px; }
.p8 .row small { font-size: 5.400px; display: block; line-height: 10.700px; }
.p8 .row .ref { height: auto; padding-bottom: 1.500px; }
.p8 .row.th { height: 34px; }
.p8 .row.th > div { font-size: 8.400px; justify-content: center; text-align: center; padding-top: 6px; }
.p8 .row svg { width: 13px; height: 11px; }
.p8 .row.sum { font-size: 9.200px; margin-top: 2px; }
.p8 .sq { margin-right: 1px; }

/* Perfect store */
.p9 .bar { height: 36px; }
.p9 .tab { margin: 16px 0 0 30px; width: 134px; height: 22.500px; font-size: 9.500px; }
.p9 .filters { margin-top: 30.500px; width: 25.500px; height: 320px; }
.p9 .filters span { font-size: 6.100px; margin: 27px 2px 0 0; }
.p9 .crumbs { margin: 10.500px 0 0 42px; width: 164px; height: 59.500px; padding: 9px 0 0 12px; font-size: 7.700px; }
.p9 .crumbs li { height: 10.100px; }
.p9 .crumbs li::before { width: 5px; height: 5px; margin-right: 4.500px; }
.p9 .xls { width: 19.500px; height: 18px; margin: 52.500px 0 0 976px; }
.p9 .table { margin: 2px 0 0 45px; font-size: 7.800px; font-weight: 400; }
.p9 .row { height: 16.530px; }
.p9 .row > div { border-right: 1px solid #f3f3e0; border-bottom: 1px solid #f3f3e0; background: #c6c69a; color: #5c5c4c; }
.p9 .row.th { height: 25.300px; }
.p9 .row.th > div { background: #ff4c4c; font-size: 8.750px; color: #fff; }
.p9 .row.th > div:nth-child(2) { background: #5932b3; }
.p9 .row.th > .v { background: #6f56b1; }
.p9 .row.th > .none { background: none; }
.p9 .row.slate > div { background: #66778f; color: #fff; }
.p9 .row.green { height: 26.400px; }
.p9 .row.green > div { background: #2f8f3d; color: #fff; font-weight: 700; font-size: 8.900px; }
.p9 .row.line > div { background: #9ca287; }
.p9 .row.eeaa > div { background: #ffa338; }
.p9 .row.prom > div { background: #e9b89c; }
.p9 .row.line, .p9 .row.eeaa, .p9 .row.prom { height: 19.500px; font-size: 8.850px; }
.p9 .row.line > div, .p9 .row.eeaa > div, .p9 .row.prom > div, .p9 .row.group > div { color: #37332a; font-weight: 600; }
.p9 .row.group { font-size: 8.850px; }
.p9 .row.group > .l { padding-left: 14px; }
.p9 .row.line > .l, .p9 .row.eeaa > .l, .p9 .row.prom > .l { padding: 0 3px 0 8px; justify-content: space-between; }
.p9 .pm { width: 14px; height: 14px; border-radius: 50%; background: #1db17c; color: #fff; display: grid; place-items: center; font: 700 14px/1 "Liberation Sans", sans-serif; }
.p9 .line .pm { background: #e0453f; color: #f4a09a; }

/* Preguntas personalizadas */
.p10 { --adm: 7.200px; }
.p10 .bar { height: 42px; }
.p10 .logo { font-size: 14px; margin-left: 43%; }
.p10 .tab { margin: 18px 0 0 35.500px; width: 172.500px; height: 26.600px; font-size: 11.300px; }
.p10 .tab .dot { margin: 0 11px 0 7px; }
.p10 .filters { margin-top: 34.400px; width: 30px; height: 377px; }
.p10 .filters svg { width: 12px; height: 9px; margin: 9px 0 0 8px; }
.p10 .filters span { font-size: 7.300px; margin: 28px 2px 0 0; }
.p10 .crumbs { margin: 34.400px 0 0 33px; width: 161px; height: 94.600px; padding: 10.500px 0 0 14px; font-size: 9.100px; }
.p10 .crumbs li { height: 12px; }
.p10 .crumbs li::before { width: 6px; height: 6px; margin-right: 5px; }
.p10 .strip { margin: 14.400px 0 0 33px; }
.p10 .amber { width: 831.500px; height: 64px; padding: 9px 0 0 8px; font-size: 11.900px; line-height: 12px; }
.p10 .gap { margin-top: 12px !important; }
.p10 .xls { width: 24px; height: 21px; margin: 2px 0 0 192px; }
.p10 .table { margin: 17px 0 0 33px; font-size: 10.330px; }
.p10 .row { height: 23px; }
.p10 .row.th { height: 28.500px; font-size: 10.450px; }
.p10 .row svg { width: 15px; height: 14px; }
.p10 .row.sum { font-size: 11px; height: 26px; }
```
FILE: tables.js
```js
// Builds every report table from compact rows: cells are split on "|".
const icon = n => `<svg><use href="#${n}"/></svg>`;

function table(id, { cols, align, head, rows, first = 'odd', kind }) {
  const box = document.getElementById(id);
  box.style.setProperty('--cols', cols.map(c => c.toFixed(2) + 'px').join(' '));
  let stripe = first === 'odd' ? 0 : 1;
  const line = (cls, cells, isHead) => {
    const row = document.createElement('div');
    row.className = 'row ' + cls;
    row.innerHTML = cells.map((c, i) => {
      let k = isHead ? (align[i] === 'l' && !kind ? 'l' : '') : ({ l: 'l', r: 'r' }[align[i]] || '');
      if (isHead && c === '') k = 'none';
      if (isHead && c.startsWith('Super ')) k = 'v';
      return `<div class="${k}">${c}</div>`;
    }).join('');
    box.append(row);
  };
  line('th', head, true);
  rows.forEach(r => {
    const m = r.match(/^@(\w+) /);
    const cells = (m ? r.slice(m[0].length) : r).split('|');
    if (m && m[1] !== 's' && m[1] !== 'keep') return line(m[1], cells);
    line((stripe % 2 ? 'even' : 'odd') + (m && m[1] === 's' ? ' s' : ''), cells);
    if (!(m && m[1] === 'keep')) stripe++;
  });
}
const widths = (f, ...xs) => xs.slice(1).map((x, i) => (x - xs[i]) * f);

const look = icon('look');
table('t1', {
  cols: widths(.9375, 102, 268, 481, 897, 1013, 1156, 1294, 1403, 1534), align: 'lllccccc',
  head: ['Negocio', 'Familia', 'Subfamilia', 'PVP<br>Medio', 'PVP<br>Máximo', 'PVP<br>Mínimo', 'PVP<br>Moda', 'Detalle'],
  rows: ['Pt01 extra|Pt0111 pack dulce|2,94|3,20|2,14|2,93', 'Pt01 extra|Pt0112 pack picante|2,98|3,10|2,93|2,93',
    'Pt01 extra|Pt0112 pack picante|2,94|3,10|2,14|2,93', 'Pt02 primera|Pt0216 oreado|1,98|2,60|1,75|1,95',
    'Pt02 primera|Pt0220 chistorra 200 gr flo|1,68|2,40|1,45|1,65', 'Pt02 primera|Pt0221 primera pack|2,07|2,60|1,65|1,99',
    'Pt16 ibéricos|Pt1601 chorizo ibérico|3,31|3,59|2,85|3,20'].map(r => `Embutido|${r}|${look}`)
});
table('t2', {
  cols: widths(.8163, 72, 431, 576, 746, 936, 1061, 1157, 1237, 1305, 1439, 1538), align: 'llllcccccc',
  head: ['Negocio', 'Familia', 'Subfamilia', 'Referencia', '%<br>Presencia', '%<br>Rotura', '%<br>VOID', '%<br>NT', '%<br>Cobertura', 'Detalle'],
  rows: [...['4q|44,4|0,0|11,1|44,4|80,0', 'bbq|0,0|0,0|40,0|60,0|0,0', 'jbq|44,4|0,0|22,2|33,3|66,7']
    .map(r => `Platos preparados refrigerados|Pt22 pizzas|Pt2227 maxis|Piz familiar ${r}|${look}`),
    '@sum ||||34,8|0,0|21,7|43,5|61,5|']
});
table('t3', {
  cols: widths(.9439, 18, 156, 197, 260, 320, 382, 422, 484, 545, 611, 717, 763, 843, 966, 1226), align: 'lrrrlrrlrllrrl',
  head: ['route', 'idRut', 'idEst', 'orden', 'stop type', 'active', 'time', 'distance', 'drive time', 'name', 'city', 'lat', 'lng'].map(h => `${h}<u>▼</u>`).concat('comment'),
  rows: ['28723|1 |visit|1|10:17|10281.4|1067|CARREFOUR EXPRESS|Madrid|404.440.848|-369.681.170.000.001|CARREFOUR EXPRESS - C. MARÍA DE GUZMÁN 57',
    '1867|2 |visit|1|10:58|1509.8|369|SUPERSOL|Madrid|404.390.621|-371.012.129.999.997|SUPERSOL - Madrid (CL. GALILEO, 87)',
    '29045|3 |visit|1|11:37|738.4|193|SUPERSOL|Madrid|404.324.127|-371.015.499.999.999|SUPERSOL - MADRID (C. GALILEO 26 &nbsp;)',
    '27141|4 |visit|1|12:14|497.5|146|CARREFOUR MARKET|Madrid|404.305.289|-37.133.149|Carrefour Market- Madrid (C/ Alberto Aguilera 56)',
    '655|5 |visit|1|12:50|211.5|72|CARREFOUR EXPRESS|Madrid|404.314.297|-37.147.602|CARREFOUR EXPRESS - Madrid (CL. GUZMÁN 9',
    '29035|6 |visit|1|13:28|652.1|166|SUPERSOL|Madrid|404.372.846|-37.143.873|SUPERSOL - MADRID (C. ANDRES MELLADO 61 &nbsp;)',
    '11295|7 |visit|1|14:05|354.5|103|CARREFOUR EXPRESS|Madrid|404.389.306|-371.479.150.000.005|CARREFOUR MARKET - CEA BERMUDEZ 53 (Madrid)',
    '28700|8 |visit|1|14:42|600.8|151|SUPERSOL|Madrid|404.427.789|-371.335.629.999.999|SUPERSOL - C. JULIAN ROMEA 4',
    '28366|9 |visit|1|15:32|10275.4|910|SUPERSOL|Madrid|404.819.917|-371.428.949.999.995|SUPERSOL - MADRID (AVD. BETANZOS 87-89 &nbsp;)',
    '29052|10 |visit|1|16:18|7641.3|654|SUPERSOL|Madrid|404.767.902|-364.496.629.999.996|SUPERSOL - MADRID (C. SANTA SUSANA 6 &nbsp;)',
    '660|11 |visit|1|16:55|324.5|71|CARREFOUR EXPRESS|Madrid|404.787.577|-364.670.750.000.005|CARREFOUR EXPRESS - Madrid (CL. SANTA SUSANA, 28)'
  ].map(r => `SONIA FUENTES RUTA 01|582|${r}`)
});
table('t4', {
  cols: widths(.9885, 83, 701, 998, 1229, 1394, 1549), align: 'lcccc', first: 'even',
  head: ['KPI', 'Semana actual', 'Mes actual', 'Mes - 1', 'YTD'],
  rows: ['@tight Promedio Visitas Normales/Día|25,8|27,2|26,1|31,8', '@s Promedio Visitas Gestión/Día|25,8|27,2|26,1|31,8',
    '@s % Cumplimiento Visita Objetivo|80,1 %|83,3 %|76,7 %|83,9 %', 'Nº visitas realizadas|129|408|521|6684',
    'Nº Tiendas visitadas|121|278|287|585', 'Promedio Visitas por Tienda|1,07|1,47|1,82|11,43',
    'Ratio eficacia promocional|25,6 %|27,2 %|21,7 %|20,2 %', 'Promedio Gestores|4,6|4,7|4,9|5,4',
    'Nº tiendas asignadas|1,087|1,087|1,087|1,087']
});
document.querySelector('#t4 .tight').className = 'row even s';

const months = ['', 'Mes analizado', 'Mes -1', 'Mes -2'];
const sq = '<i class="sq">i</i>';
const kpi = (id, cols, first, rows) => table(id, { cols, align: 'lccc', head: months, first, rows });
kpi('t5a', widths(.574, 98, 405, 582, 682, 781), 'even', [
  `@keep ${sq}Nº de tiendas totales|829|829|829`, `${sq}Nº de tiendas chequeadas|147|452|12`, `${sq}Nº visitas|154|568|18`]);
kpi('t5b', widths(.574, 810, 1077, 1273, 1382, 1493), 'odd', [
  `${sq}% presencia|80,4 %|75,4 %|70,3 %`, `${sq}% Rotura|0,9 %|0,6%|0,0%`, `${sq}% No Prod+No PVP|0,6 %|0,6 %|1,0 %`, `${sq}% NT|18,1 %|23,4 %|28,7 %`]);
const pct = { ALCAMPO: '45,5|60,9|77,4', CARREFOUR: '84,3|74,0|82,0', 'CARREFOUR MARKET': '66,7|66,7|66,7', 'EROSKI HIPER': '0,0|28,6|0,0', 'GROSS MERCAT': '0,0|0,0|9,1', HIPERCOR: '35,7|32,8|28,6', 'MAKRO JUNIOR': '62,1|62,1|0,0', 'MINI CARREFOUR': '83,8|83,8|83,8' };
kpi('t5c', widths(.574, 98, 430, 595, 687, 781), 'odd',
  'ALCAMPO,ALMACENES COSTASOL,BAUHAUS,CARREFOUR,CARREFOUR MARKET,CASH BAREA,CASH JEREZ,CASH SEVILLA,Cash&Fresh,CONDIS,CONSUM CHARTER,Dialprix,EROSKI HIPER,GADISA,GROSS MERCAT,HIPER SIMPLY,HIPERCOR,Hiperdino,HIPERUSERA CASH,HIPERUSERA SUPERMERCADOS,LECLERC,MAKRO ECO,MAKRO JUNIOR,MINI CARREFOUR,SIMPLY MARKET,SUPER MAS,SUPERMERCADOS ECI'
    .split(',').map(n => n + '|' + (pct[n] || '0,0|0,0|0,0').split('|').map(v => v + ' %').join('|')));
kpi('t5d', widths(.574, 810, 1142, 1307, 1400, 1493), 'even',
  'ALCAMPO|26|55,ALMACENES COSTASOL|0|0,AYALA|0|1,BAUHAUS|3|4,BM Complet|0|0,CARREFOUR|181|421,CARREFOUR MARKET|7|36,CASH BAREA|0|0,CASH JEREZ|0|1,CASH SEVILLA|0|1,Cash&Fresh|1|10,CONDIS|0|0,CONSUM CHARTER|0|0,Dialprix|0|12,Dialsur|0|7,EROSKI CENTER|3|13,EROSKI HIPER|24|22,GADISA|0|1,GROSS MERCAT|4|4,HIPER SIMPLY|0|0,HIPERCOR|22|33,Hiperdino|0|0,HIPERMANACOR|0|0,HIPERUSERA CASH|0|2,HIPERUSERA SUPERMERCADOS|0|25,MAKRO ECO|3|0,MAKRO JUNIOR|14|22,MINI CARREFOUR|15|28,SIMPLY MARKET|0|6,SUPECO|6|20,SUPER FROIZ|0|1,SUPER MAS|0|7,SUPERMERCADOS COVIRAN|0|1,SUPERMERCADOS ECI|0|1,@sum |309|734'
    .split(',').map(r => r + '|0'));

kpi('t7a', widths(.6569, 107, 421, 605, 714, 824), 'even', [
  `@keep ${sq}Nº de tiendas totales|61|61|61`, `${sq}Nº de tiendas chequeadas|7|8|27`, `${sq}Nº visitas|7|9|29`]);
kpi('t7b', widths(.6569, 854, 1108, 1297, 1407, 1518), 'odd', [
  `${sq}% presencia|73,2 %|66,8 %|46,0 %`, `${sq}% Rotura|0,0 %|0,5%|1,2%`, `${sq}% No Prod+No PVP|0,0 %|0,0 %|0,0 %`, `${sq}% NT|26,8 %|32,6 %|52,8 %`]);
kpi('t7c', widths(.6569, 107, 388, 587, 706, 824), 'odd', ['CARREFOUR MARKET|66,7 %|66,7 %|66,7 %', 'SUPER MAS|83,3 %|nan %|nan %']);
kpi('t7d', widths(.6569, 854, 1114, 1299, 1409, 1518), 'odd', ['CARREFOUR MARKET|25|20|38', 'Cash&Fresh|2|4|10', 'SUPECO|1|4|5', 'SUPER MAS|9|4|11', '@sum |37|32|64']);

table('t6', {
  cols: widths(.574, 124, 194, 243, 311, 433, 600, 664, 736, 839, 954, 1027, 1093, 1143, 1192, 1330, 1433, 1509), align: 'ccccccccccccclcc', kind: 'c',
  head: ['idPromo', 'idEst', 'Enseña', 'Población', 'Nombre del centro', 'Fecha<br>dato', 'GPV', 'Cumplimiento', 'Exposición<br>Final', 'Cantidad', 'Ubic.<br>Final', 'Cart.<br>Final', 'Surt.<br>Final', 'Observaciones', 'Foto', 'Indicador'],
  rows: ['2626|Adeje|siam mall|17', '1748|Granadilla de abona|san isidro|17', '2630|Orotava, la|;orotava (la);san<br>jerónimo|18', '2633|Tacoronte|tacoronte|18',
    '2620|Arucas|arucas|19', '2621|Palmas de gran<br>canaria, las|las suertes|19', '2624|Palmas de gran<br>canaria, las|miller|19', '2629|Palmas de gran<br>canaria, las|escaleritas|19',
    '2628|Palmas de gran<br>canaria, las|el muelle|19', '2627|Mogan|la marea -<br>arguineguín|20', '2622|San bartolomé de<br>tirajana|el tablero|20', '2625|Santa lucia de<br>tirajana|vecindario|20']
    .map((r, i) => {
      const [est, town, shop, day] = r.split('|');
      const obs = i ? 'No hay observaciones' : 'No aplica en esta tienda por su<br>plan comercial.';
      return `104721|${est}|Hiperdino|${town}|Hiperdino${shop[0] === ';' ? '' : ' '}${shop}|${day}/02/20|Teodoro<br>selles|No aplica|Isla promocional 2<br>palets|0|Sin<br>ubicacion|||${obs}|${icon('nophoto')}|<s></s>`;
    })
});

const R = {
  typ: 'C51 - tabla neo,C52 - funda universal,C52-funda confort plus,C52-funda premium 2en1,C54 - tendedero alumix',
  euro: 'C12-bayeta suave 1+1,C21-fibra con esponja ultra fresh 2+1,C32-fregona basic/style,C64-bolsa basura ecobag 30 l'
};
table('t8', {
  cols: widths(.6569, 121, 198, 439, 511, 583, 705, 820, 1007, 1100, 1201, 1284, 1361, 1432, 1503), align: 'clcccclcccccc', kind: 'c',
  head: ['idPromo', 'Nombre promoción', 'F. Inicio', 'F.Final', 'Enseña', 'Familia', 'Referencias', `<span>${sq}Tiendas<br>Visitadas</span>`, `<span>${sq}Tiendas<br>Chequeadas</span>`, 'Cumplen', 'NO<br>cumplen', 'NO<br>Aplica', 'Detalle'],
  rows: [
    ['32132|CROSS CRF MARKET ESTROPAJOS|02/05/18|28/02/21|Carrefour market|Estropajos', 'C21-estropajo fibra con esponja 3in1,C21-fibra con esponja 2+1,C21-fibra con esponja ultra fresh 2+1,C24-estropajo fibra con esponja colors 3+1', '25|49|20,41 %|12,24 %|63,27 %'],
    ['105279|Turbo Smart|17/02/20|25/03/20|Carrefour market|Cubos de fregar', 'C32 - turbo smart', '25|16|56,25 %|0,00 %|37,50 %'],
    ['104013|Acción SMART|15/01/20|01/03/20|Dialprix|Cubos de fregar', 'C32 - turbo smart', '5|5|0,00 %|20,00 %|80,00 %'],
    ['104108|Isla TyP|15/01/20|15/02/20|Hiperdino|Fundas planchar', R.typ, '21|1|0,00 %|0,00 %|100,00 %'],
    ['104109|Acción 1€|20/01/20|29/02/20|Hiperdino|Bayetas', R.euro, '21|1|0,00 %|0,00 %|100,00 %'],
    ['104721|Isla limpieza|01/02/20|29/02/20|Hiperdino|Bayetas', 'C12-bayeta microfibras colors 4xl,C12-bayeta suave 2+1,C21-salvauñas 2+1 / 3x2 / triplo,C32 - turbo smart,C32-cubo superfácil,C32-superfregona,C392 - recambio turbo 2en1', '21|10|0,00 %|0,00 %|100,00 %'],
    ['104723|Isla TyP|15/02/20|29/02/20|Hiperdino|Fundas planchar', R.typ, '21|10|0,00 %|0,00 %|100,00 %'],
    ['104722|Acción 1€|01/03/20|10/03/20|Hiperdino|Bayetas', R.euro, '21|1|0,00 %|0,00 %|100,00 %'],
    ['105046|Folleto|31/01/20|29/02/20|Super mas|Bayetas', 'C12-bayeta microfibras colors 4xl,C21-salvauñas 2+1 / 3x2 / triplo', '5|5|80,00 %|0,00 %|20,00 %']
  ].map(([a, refs, b]) => {
    const list = refs.split(',');
    return `${a}|<span class="ref">${list.length} en promoción${list.map(x => `<small>${x}</small>`).join('')}</span>|${b}|${icon('eye')}`;
  }).concat('@sum ||||||||98|23,5 %|7,1 %|66,3 %|')
});

const minus = '<i class="pm">−</i>', plus = '<i class="pm">+</i>';
table('t9', {
  cols: widths(.6888, 127, 448, 543, 695.5, 864, 1033.5, 1122, 1227, 1319, 1418.5, 1503), align: 'lccccccccc',
  head: ['', 'TOTAL', 'Super grande', 'Super mediano', 'Super pequeño', 'Enero', 'Febrero', 'Marzo', 'Abril', 'Mayo'],
  rows: [
    '@slate PdV Enrutados|316|232|14|70|316|316|316|316|316', '@slate PdV visitados|363|294|17|52|63|90|37|1|6',
    '@green PERFECT STORE (100 puntos)|59,71|59,71|71,28|54,95|60,92|62,31|51,14|48,75|62,57',
    `@line LINEAL (45 puntos)${minus}|32,65|32,52|37,61|32,71|32,13|33,51|30,67|39,00|36,99`,
    '@group Cumplimiento surtido|5,82|5,86|10,50|3,30|5,42|6,37|5,19|6,00|5,89',
    '@leaf SKU objetivo|13,46|13,61|9,20|12,67|13,23|13,91|12,58|14,00|14,67', '@leaf SKU promedio|10,13|10,44|8,00|5,92|10,13|10,07|9,90|12,00|12,33',
    '@leaf % Consecución|75,29|76,70|86,96|46,71|76,57|72,42|78,73|85,71|84,09', '@leaf SKU en surtido|31,49|31,47|26,20|34,00|31,20|33,20|27,70|38,00|31,67',
    '@group Rotura/OOS|15,20|15,04|14,80|18,00|15,29|15,12|14,73|18,00|18,00',
    '@leaf % Rotura|0,90|0,98|0,00|0,00|0,86|1,30|0,17|0,00|0,00', '@leaf 10% o más|4|4|0|0|0|4|0|0|0',
    '@leaf Entre 8 al 9,99 %|0|0|0|0|0|0|0|0|0', '@leaf Entre 6 al 7,99 %|0|14|0|0|8|5|1|0|0', '@leaf Entre 4 al 5,99 %|0|2|0|0|1|1|0|0|0',
    '@leaf Entre 2 al 3,99 %|0|0|0|0|0|0|0|0|0', '@leaf Entre 0 al 1,99 %|6|178|5|12|62|87|39|1|6',
    '@group Calidad de lineal|11,63|11,63|12,31|11,41|11,42|12,02|10,75|15,00|13,10',
    '@leaf % PdV con bloque marca|64,65|59,30|1,28|4,07|59,86|69,33|60,63|100,00|66,67', '@leaf Fregonas|69,77|63,26|0,93|5,58|63,38|75,26|62,50|100,00|100,00',
    '@leaf Bayetas|50,70|47,44|0,00|3,26|43,66|58,76|47,50|100,00|16,67', '@leaf Cubos de fregar|80,93|74,42|2,33|4,19|78,87|81,44|80,00|100,00|100,00',
    '@leaf Estropajos|57,21|52,09|1,86|3,26|53,52|61,86|52,50|100,00|50,00', '@leaf % PdV con attack nivel OK|29,66|27,93|1,04|0,68|29,83|29,17|29,85|29,41|34,31',
    '@leaf Fregonas|41,28|38,72|1,40|1,16|44,01|38,14|43,75|50,00|41,67', '@leaf Bayetas|24,57|23,18|0,62|0,78|24,65|25,26|22,50|33,33|25,00',
    '@leaf Cubos de fregar|19,81|18,60|1,02|0,19|18,03|19,59|22,50|0,00|30,00', '@leaf Estropajos|46,28|43,95|1,63|0,70|46,48|46,91|42,50|50,00|58,33',
    `@eeaa EEAA (35 puntos)${plus}|9,22|9,36|15,73|4,06|9,07|9,32|9,11|0,00|11,63`,
    `@prom PROMOCIONES (20 puntos)${plus}|19,61|19,57|20,00|20,00|19,72|19,48|20,00|No aplica|20,00`]
});
document.querySelectorAll('#t9 .leaf > .l').forEach(c => { c.className = 'r'; });

const q1 = '¿Qué referencia has conseguido dar de alta?', q2 = '¿Qué referencias has podido hacer empuje de pedido?';
table('t10', {
  cols: widths(.7589, 100, 705, 1061, 1221, 1388, 1477), align: 'lcccc', kind: 'c',
  head: ['Preguntas', 'Enseña', 'Familia', 'Respuestas', 'Tipo'],
  rows: [[q1, 'EROSKI CENTER', 1], [q1, 'CARREFOUR MARKET', 3], [q1, 'SUPERMERCADOS COVIRAN', 1], [q1, 'GADISA', 9], [q1, 'SUPER FROIZ', 2],
    [q2, 'EROSKI CENTER', 1], [q2, 'CARREFOUR MARKET', 3], [q2, 'SUPERMERCADOS COVIRAN', 1], [q2, 'GADISA', 9], [q2, 'SUPER FROIZ', 2], [q2, 'SUPERMERCADOS ECI', 1], [q2, 'HIPER FROIZ', 1]]
    .map(([q, e, n]) => `${q}|${e}|BAYETAS|${n}|${icon('pencil')}`)
    .concat(`Haz foto al lineal de TYP|BAUHAUS|TyP / BAZAR|2|${icon('pic')}`, '@sum |||36|')
});
```
